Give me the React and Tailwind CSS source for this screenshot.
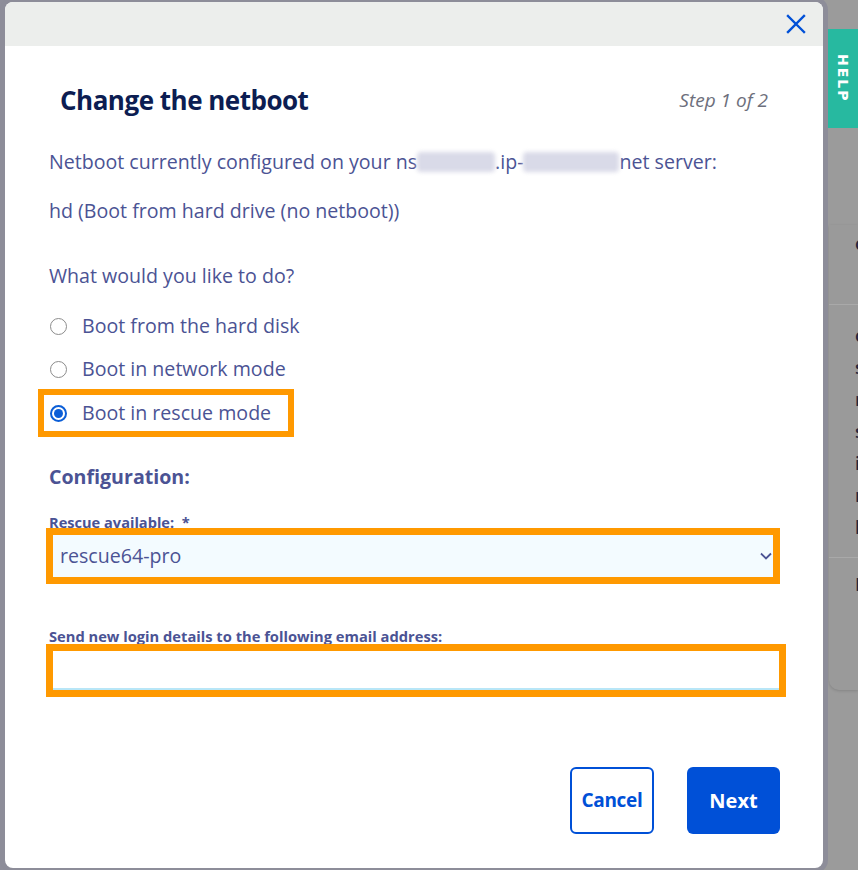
import React from "react";

const F = { fontFamily: "'Open Sans', 'Noto Sans', sans-serif" };

function Radio({ checked }) {
  if (checked) {
    return (
      <span className="flex h-[17px] w-[17px] shrink-0 items-center justify-center rounded-full border-2 border-[#0b5ed7] bg-white">
        <span className="h-[9px] w-[9px] rounded-full bg-[#0b5ed7]" />
      </span>
    );
  }
  return <span className="h-[17px] w-[17px] shrink-0 rounded-full border-[1.5px] border-[#8c8c8c] bg-white" />;
}

function Blur({ w }) {
  return (
    <span className="relative inline-block align-middle" style={{ width: w }}>
      <span className="block h-[20px] w-full rounded-sm bg-[#d9dae8] blur-[2px]" />
    </span>
  );
}

export default function App() {
  return (
    <div className="relative h-[870px] w-[858px] overflow-hidden bg-[#9b9b9b]" style={F}>
      {/* background page */}
      <div className="flex h-full w-full">
        <div className="flex h-full w-[5px] flex-col overflow-hidden bg-[#8e8e9a] text-[#2b2f4a]">
          <div className="h-[47px] border-b border-[#a2a2ad]" />
          <div className="flex h-[107px] items-start justify-end border-b border-[#a2a2ad] pt-[26px] text-[20px] font-bold leading-none">
            <span className="-mr-[6px]">a</span>
          </div>
          <div className="flex h-[100px] items-start justify-end border-b border-[#a2a2ad] pt-[50px] text-[20px] leading-none">
            <span className="-mr-[4px]">t</span>
          </div>
          <div className="flex h-[130px] items-start justify-end border-b border-[#a2a2ad] pt-[45px] text-[20px] leading-none">
            <span className="-mr-[5px]">r</span>
          </div>
          <div className="flex h-[116px] items-start justify-end border-b border-[#a2a2ad] pt-[50px] text-[20px] leading-none">
            <span className="-mr-[7px]">3</span>
          </div>
        </div>
        <div className="flex-1" />
        <div className="flex w-[35px] flex-col">
          <div className="h-[225px]" />
          <div className="ml-[6px] h-[465px] overflow-hidden rounded-bl-[10px] bg-[#9a9a9a] shadow-[0_1px_3px_rgba(0,0,0,0.15)] text-[18px] font-semibold leading-[32px] text-[#22263d]">
            <div className="h-[80px] border-b border-[#a9a9a9] pl-[26px] pt-[2px]">c</div>
            <div className="pl-[26px] pt-[14px]">
              <div>c</div>
              <div>s</div>
              <div>n</div>
              <div>s</div>
              <div>i</div>
              <div>n</div>
              <div>l</div>
            </div>
            <div className="mt-[14px] h-[100px] border-t border-[#a9a9a9] pl-[26px] pt-[10px]">I</div>
          </div>
        </div>
      </div>

      {/* HELP tab */}
      <div className="absolute right-0 top-[29px] flex h-[99px] w-[32px] items-center justify-center bg-[#27b9a0]">
        <span className="text-[14px] font-extrabold tracking-[2px] text-white [writing-mode:vertical-rl]" style={{ fontFamily: "'DejaVu Sans', sans-serif" }}>HELP</span>
      </div>

      {/* modal */}
      <div className="absolute left-[5px] top-[2px] flex h-[866px] w-[818px] flex-col overflow-hidden rounded-[8px] bg-white shadow-[0_0_0_5px_#8d8d99]">
        <div className="flex h-[44px] shrink-0 items-center justify-end bg-[#eceeec] pr-[17px]">
          <svg width="20" height="20" viewBox="0 0 20 20" fill="none" stroke="#0050d7" strokeWidth="2.4" strokeLinecap="square">
            <path d="M2 2 L18 18 M18 2 L2 18" />
          </svg>
        </div>

        <div className="mt-[36px] flex h-[36px] items-center justify-between pl-[55px] pr-[55px]">
          <h1 className="text-[26px] font-bold leading-[36px] tracking-[-0.5px] text-[#0c1d52]">Change the netboot</h1>
          <span className="text-[19px] italic text-[#6d6f7c]">Step 1 of 2</span>
        </div>

        <div className="flex flex-col pl-[44px] text-[19.6px] leading-[24px] text-[#4b5394]">
          <p className="mt-[32px] flex items-center whitespace-nowrap">
            <span>Netboot currently configured on your ns</span>
            <Blur w="78px" />
            <span>.ip-</span>
            <Blur w="96px" />
            <span>net server:</span>
          </p>
          <p className="mt-[25px]">hd (Boot from hard drive (no netboot))</p>
          <p className="mt-[41px]">What would you like to do?</p>

          <label className="ml-[1px] mt-[26px] flex h-[24px] items-center gap-[15px]">
            <Radio />
            <span>Boot from the hard disk</span>
          </label>
          <label className="ml-[1px] mt-[19px] flex h-[24px] items-center gap-[15px]">
            <Radio />
            <span>Boot in network mode</span>
          </label>
          <label className="-ml-[11px] mt-[8px] flex h-[48px] w-[256px] items-center gap-[15px] border-[6px] border-[#ff9900] pl-[6px]">
            <Radio checked />
            <span className="whitespace-nowrap">Boot in rescue mode</span>
          </label>

          <p className="mt-[28px] font-bold">Configuration:</p>

          <p className="mt-[24px] text-[14.6px] font-bold leading-[18px]">Rescue available:&nbsp; *</p>
          <div className="-ml-[3px] -mt-[3px] flex h-[56px] w-[734px] border-[7px] border-[#ff9900]">
            <div className="flex flex-1 items-center justify-between bg-[#f3fbff] pl-[7px] pr-[1px]">
              <span>rescue64-pro</span>
              <svg width="12" height="8" viewBox="0 0 12 8" fill="none" stroke="#4b5394" strokeWidth="1.8">
                <path d="M1 1.5 L6 6.5 L11 1.5" />
              </svg>
            </div>
          </div>

          <p className="mt-[43px] text-[14.7px] font-bold leading-[18px]">Send new login details to the following email address:</p>
          <div className="-ml-[3px] -mt-[1px] flex h-[53px] w-[740px] border-[7px] border-[#ff9900]">
            <div className="flex-1 border-b-2 border-[#b8e6f7] bg-white" />
          </div>
        </div>

        <div className="mt-[70px] flex justify-end gap-[33px] pr-[43px]">
          <button className="flex h-[67px] w-[84px] items-center justify-center rounded-[6px] border-2 border-[#0050d7] bg-white text-[19px] font-bold tracking-[-0.3px] text-[#0050d7]">
            Cancel
          </button>
          <button className="flex h-[67px] w-[93px] items-center justify-center rounded-[6px] bg-[#0050d7] text-[20px] font-bold text-white">
            Next
          </button>
        </div>
      </div>
    </div>
  );
}
